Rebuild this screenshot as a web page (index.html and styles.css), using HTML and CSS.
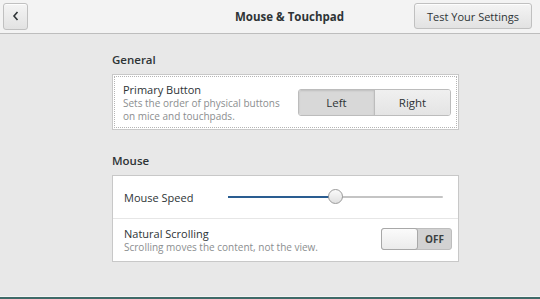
FILE: index.html
```html
<!DOCTYPE html>
<html lang="en">
<head>
  <meta charset="UTF-8">
  <title>Mouse &amp; Touchpad</title>
  <link rel="stylesheet" href="styles.css">
</head>
<body>
<header class="topbar">
  <button class="btn back-btn" aria-label="Back">
    <svg width="10" height="12" viewBox="0 0 10 12"><path d="M6.5 2 L3 6 L6.5 10" fill="none" stroke="#2e3436" stroke-width="1.6"/></svg>
  </button>
  <h1 class="title">Mouse &amp; Touchpad</h1>
  <button class="btn test-btn">Test Your Settings</button>
</header>
<main class="content">
  <h2 class="section-title">General</h2>
  <div class="frame">
    <div class="row row-focus">
      <div class="label">
        <div class="name">Primary Button</div>
        <div class="desc">Sets the order of physical buttons<br>on mice and touchpads.</div>
      </div>
      <div class="segmented">
        <span class="seg active">Left</span>
        <span class="seg">Right</span>
      </div>
    </div>
  </div>

  <h2 class="section-title">Mouse</h2>
  <div class="frame">
    <div class="row row-speed">
      <div class="name">Mouse Speed</div>
      <div class="slider">
        <div class="fill"></div>
        <div class="knob"></div>
      </div>
    </div>
    <div class="row row-scroll">
      <div class="label">
        <div class="name">Natural Scrolling</div>
        <div class="desc">Scrolling moves the content, not the view.</div>
      </div>
      <div class="switch">
        <span class="switch-knob"></span>
        <span class="switch-off">OFF</span>
      </div>
    </div>
  </div>
</main>
<footer class="bottom-edge"></footer>
</body>
</html>
```
FILE: styles.css
```css
:root{
  --bg:#e8e8e8;
  --header:#f3f3f3;
  --border:#c3c3c3;
  --text:#2e3436;
  --dim:#8b8e8f;
  --blue:#2a5d91;
}
*{box-sizing:border-box;margin:0;padding:0}
html,body{height:100%}
body{background:var(--bg);color:var(--text);font-family:"Open Sans","Noto Sans",sans-serif;font-size:11px;display:flex;flex-direction:column;overflow:hidden}

.topbar{height:34px;background:var(--header);border-bottom:1px solid #bdbdbd;display:flex;align-items:center;padding:0 8px 1px 3px}
.btn{font-family:inherit;color:var(--text);border:1px solid #c0c0c0;border-radius:3px;background:linear-gradient(#f4f4f4,#e2e2e2);box-shadow:0 1px 0 rgba(255,255,255,.8) inset;cursor:pointer}
.back-btn{width:25px;height:27px;display:flex;align-items:center;justify-content:center}
.title{flex:1;font-size:11.5px;font-weight:700;padding-left:207px}
.test-btn{width:118px;height:26px;font-size:11px}

.content{flex:1;padding:18px 0 0 112px}
.section-title{font-size:11.5px;font-weight:600;height:22px;line-height:14px;padding-top:1px}
.frame{width:347px;background:#fff;border:1px solid #c8c8c8;margin-bottom:23px}
.row{display:flex;align-items:center;padding:0 6px 0 11px}
.row-focus{height:52px;margin:1px;outline:1px dotted #b5b5b5;outline-offset:-1px;padding-left:9px}
.name{font-size:11px;line-height:15px}
.desc{font-size:10px;line-height:13px;color:var(--dim)}
.label{flex:1}

.segmented{display:flex;height:27px;border:1px solid #bcbcbc;border-radius:3px;overflow:hidden;width:153px}
.seg{flex:1;display:flex;align-items:center;justify-content:center;font-size:11.5px;background:linear-gradient(#f0f0f0,#e4e4e4)}
.seg.active{background:#d8d8d8;border-right:1px solid #bcbcbc;box-shadow:0 1px 2px rgba(0,0,0,.12) inset}

.row-speed{height:43px;border-bottom:1px solid #e6e6e6}
.row-speed .name{width:103px}
.slider{position:relative;width:215px;height:2px;background:#c4c4c4;border-radius:1px;margin-left:1px}
.slider .fill{width:107px;height:2px;background:var(--blue)}
.slider .knob{position:absolute;left:100px;top:-7px;width:15px;height:15px;border-radius:50%;border:1px solid #9a9a9a;background:linear-gradient(#fafafa,#e0e0e0)}

.row-scroll{height:42px}
.switch{display:flex;width:71px;height:22px;border:1px solid #bdbdbd;border-radius:3px;background:#d2d2d2;margin-top:-2px}
.switch-knob{width:37px;margin:-1px 0 -1px -1px;border:1px solid #a8a8a8;border-radius:3px;background:linear-gradient(#fbfbfb,#ebebeb)}
.switch-off{flex:1;display:flex;align-items:center;justify-content:center;font-size:10px;font-weight:700;color:#3b3f40}

.bottom-edge{height:3px;background:#3f6a68;border-top:1px solid #f4f4f4}
```
